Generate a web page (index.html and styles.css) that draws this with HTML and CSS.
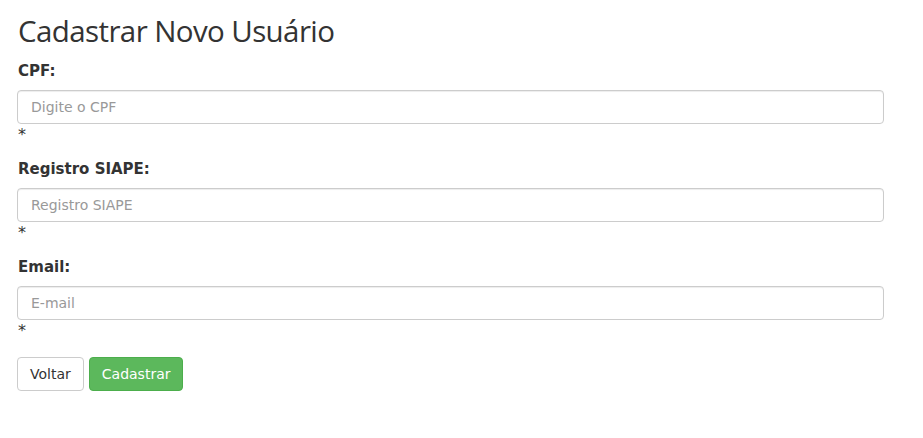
FILE: index.html
```html
<!DOCTYPE html>
<html lang="pt-BR">
<head>
<meta charset="utf-8">
<title>Cadastrar Novo Usuário</title>
<link rel="stylesheet" href="styles.css">
</head>
<body>
<div class="page">
  <h2 class="title">Cadastrar Novo Usuário</h2>
  <form class="form">
    <div class="group">
      <label class="label" for="cpf">CPF:</label>
      <input class="input" id="cpf" type="text" placeholder="Digite o CPF">
      <div class="req">*</div>
    </div>
    <div class="group">
      <label class="label" for="siape">Registro SIAPE:</label>
      <input class="input" id="siape" type="text" placeholder="Registro SIAPE">
      <div class="req">*</div>
    </div>
    <div class="group">
      <label class="label" for="email">Email:</label>
      <input class="input" id="email" type="text" placeholder="E-mail">
      <div class="req">*</div>
    </div>
    <div class="actions">
      <button type="button" class="btn btn-default">Voltar</button>
      <button type="button" class="btn btn-success">Cadastrar</button>
    </div>
  </form>
</div>
</body>
</html>
```
FILE: styles.css
```css
* { box-sizing: border-box; }
html, body { margin: 0; padding: 0; background: #fff; }
body {
  font-family: "DejaVu Sans", Verdana, sans-serif;
  font-size: 14px;
  line-height: 20px;
  color: #333;
}
.page {
  padding: 0 39px 0 17px;
}
.title {
  font-family: "Open Sans", "Noto Sans", sans-serif;
  font-weight: 400;
  font-size: 29.5px;
  letter-spacing: -0.6px;
  line-height: 33px;
  margin: 14px 0 14px 1px;
  color: #333;
}
.group {
  margin-bottom: 15px;
}
.label {
  display: block;
  font-weight: bold;
  font-size: 15px;
  margin: 0 0 9px 1px;
}
.input {
  display: block;
  width: 100%;
  height: 34px;
  padding: 6px 13px;
  font-family: inherit;
  font-size: 14px;
  color: #555;
  background: #fff;
  border: 1px solid #ccc;
  border-radius: 4px;
  box-shadow: inset 0 1px 1px rgba(0,0,0,.075);
  outline: none;
}
.input::placeholder { color: #999; }
.req {
  margin-left: 1px;
  height: 20px;
  padding-top: 2px;
  line-height: 18px;
  font-size: 16px;
}
.actions {
  padding-top: 2px;
  display: flex;
  gap: 5px;
}
.btn {
  height: 34px;
  padding: 6px 12px;
  font-family: inherit;
  font-size: 14px;
  line-height: 20px;
  border: 1px solid transparent;
  border-radius: 4px;
  cursor: pointer;
}
.btn-default {
  color: #333;
  background: #fff;
  border-color: #ccc;
}
.btn-success {
  color: #fff;
  background: #5cb85c;
  border-color: #4cae4c;
}
```
